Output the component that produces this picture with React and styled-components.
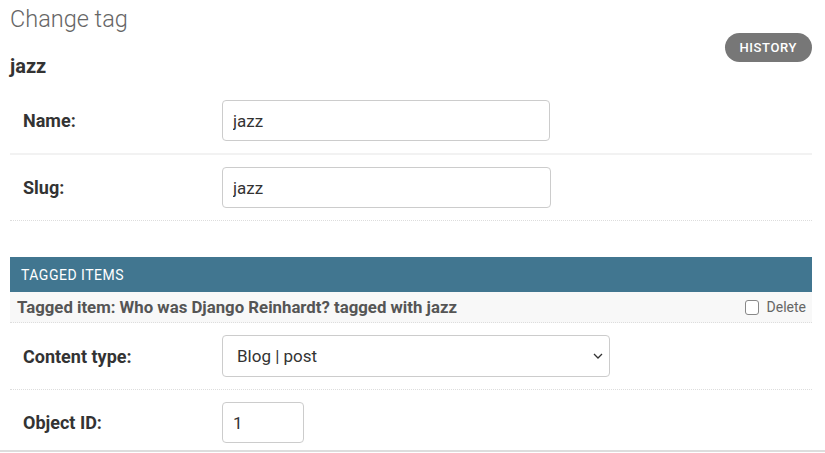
import React from 'react';
import styled, { createGlobalStyle } from 'styled-components';

const GlobalStyle = createGlobalStyle`
  html, body {
    margin: 0;
    padding: 0;
    background: #fff;
    font-family: Roboto, "Liberation Sans", sans-serif;
    color: #333;
  }
`;

const Container = styled.div`
  padding: 0 13px 0 10px;
`;

const PageTitle = styled.h1`
  margin: 0;
  padding-top: 5px;
  font-size: 23.5px;
  line-height: 28px;
  font-weight: 300;
  color: #666;
`;

const ObjectBar = styled.div`
  display: flex;
  justify-content: space-between;
  align-items: flex-start;
`;

const ObjectName = styled.h2`
  margin: 21px 0 10px 0;
  font-size: 20px;
  line-height: 24px;
  font-weight: 700;
  color: #333;
`;

const ToolButton = styled.a`
  display: inline-flex;
  align-items: center;
  height: 29px;
  padding: 0 15px;
  border-radius: 15px;
  background: #777;
  color: #fff;
  font-size: 13px;
  font-weight: 500;
  letter-spacing: 0.6px;
  text-transform: uppercase;
  text-decoration: none;
  box-sizing: border-box;
`;

const Fieldset = styled.div`
  margin-bottom: ${({ gap }) => gap || 0}px;
`;

const FormRow = styled.div`
  display: flex;
  align-items: center;
  padding: ${({ last }) => (last ? '12px 13px 7px' : '12px 13px')};
  border-bottom: ${({ solid, last }) =>
    last ? 'none' : solid ? '2px solid #f2f2f2' : '1px dotted #ddd'};
`;

const Label = styled.label`
  width: 199px;
  flex-shrink: 0;
  font-size: 18px;
  font-weight: 700;
  color: #333;
`;

const TextInput = styled.input`
  width: ${({ w }) => w}px;
  height: 41px;
  box-sizing: border-box;
  padding: 0 10px;
  border: 1px solid #ccc;
  border-radius: 4px;
  font-family: Roboto, "Liberation Sans", sans-serif;
  font-size: 17px;
  color: #333;
  background: #fff;
  outline: none;
`;

const SelectWrap = styled.div`
  position: relative;
  width: 388px;
`;

const Select = styled.select`
  width: 100%;
  height: 42px;
  box-sizing: border-box;
  padding: 0 30px 0 14px;
  border: 1px solid #ccc;
  border-radius: 4px;
  font-family: Roboto, "Liberation Sans", sans-serif;
  font-size: 17px;
  color: #333;
  background: #fff;
  appearance: none;
  outline: none;
`;

const Chevron = styled.svg`
  position: absolute;
  right: 6px;
  top: 16px;
  pointer-events: none;
`;

const InlineHeader = styled.h2`
  margin: 0;
  height: 35px;
  display: flex;
  align-items: center;
  padding: 0 11px;
  background: #417690;
  color: #fff;
  font-size: 14px;
  font-weight: 400;
  letter-spacing: 0.5px;
  text-transform: uppercase;
`;

const InlineItemBar = styled.div`
  display: flex;
  align-items: center;
  justify-content: space-between;
  height: 30px;
  padding: 0 6px 0 7px;
  background: #f8f8f8;
  border-bottom: 1px dotted #ddd;
`;

const InlineTitle = styled.h3`
  margin: 0;
  font-size: 16.8px;
  font-weight: 700;
  color: #555;
`;

const DeleteBox = styled.label`
  display: flex;
  align-items: center;
  gap: 8px;
  font-size: 14px;
  color: #666;
`;

const CheckSquare = styled.span`
  width: 14px;
  height: 15px;
  border: 1px solid #888;
  border-radius: 3px;
  background: #fff;
  box-sizing: border-box;
`;

const BottomRule = styled.div`
  border-top: 2px solid #ddd;
`;

export default function App() {
  return (
    <>
      <GlobalStyle />
      <Container>
        <PageTitle>Change tag</PageTitle>
        <ObjectBar>
          <ObjectName>jazz</ObjectName>
          <ToolButton href="#">History</ToolButton>
        </ObjectBar>
        <Fieldset gap={36}>
          <FormRow solid>
            <Label>Name:</Label>
            <TextInput w={328} defaultValue="jazz" />
          </FormRow>
          <FormRow>
            <Label>Slug:</Label>
            <TextInput w={329} defaultValue="jazz" />
          </FormRow>
        </Fieldset>
        <Fieldset>
          <InlineHeader>Tagged items</InlineHeader>
          <InlineItemBar>
            <InlineTitle>Tagged item: Who was Django Reinhardt? tagged with jazz</InlineTitle>
            <DeleteBox>
              <CheckSquare />
              Delete
            </DeleteBox>
          </InlineItemBar>
          <FormRow>
            <Label>Content type:</Label>
            <SelectWrap>
              <Select defaultValue="post">
                <option value="post">Blog | post</option>
              </Select>
              <Chevron width="12" height="10" viewBox="0 0 12 10">
                <path d="M2 3 L6 7 L10 3" fill="none" stroke="#333" strokeWidth="1.3" />
              </Chevron>
            </SelectWrap>
          </FormRow>
          <FormRow last>
            <Label>Object ID:</Label>
            <TextInput w={82} defaultValue="1" />
          </FormRow>
        </Fieldset>
      </Container>
      <BottomRule />
    </>
  );
}
